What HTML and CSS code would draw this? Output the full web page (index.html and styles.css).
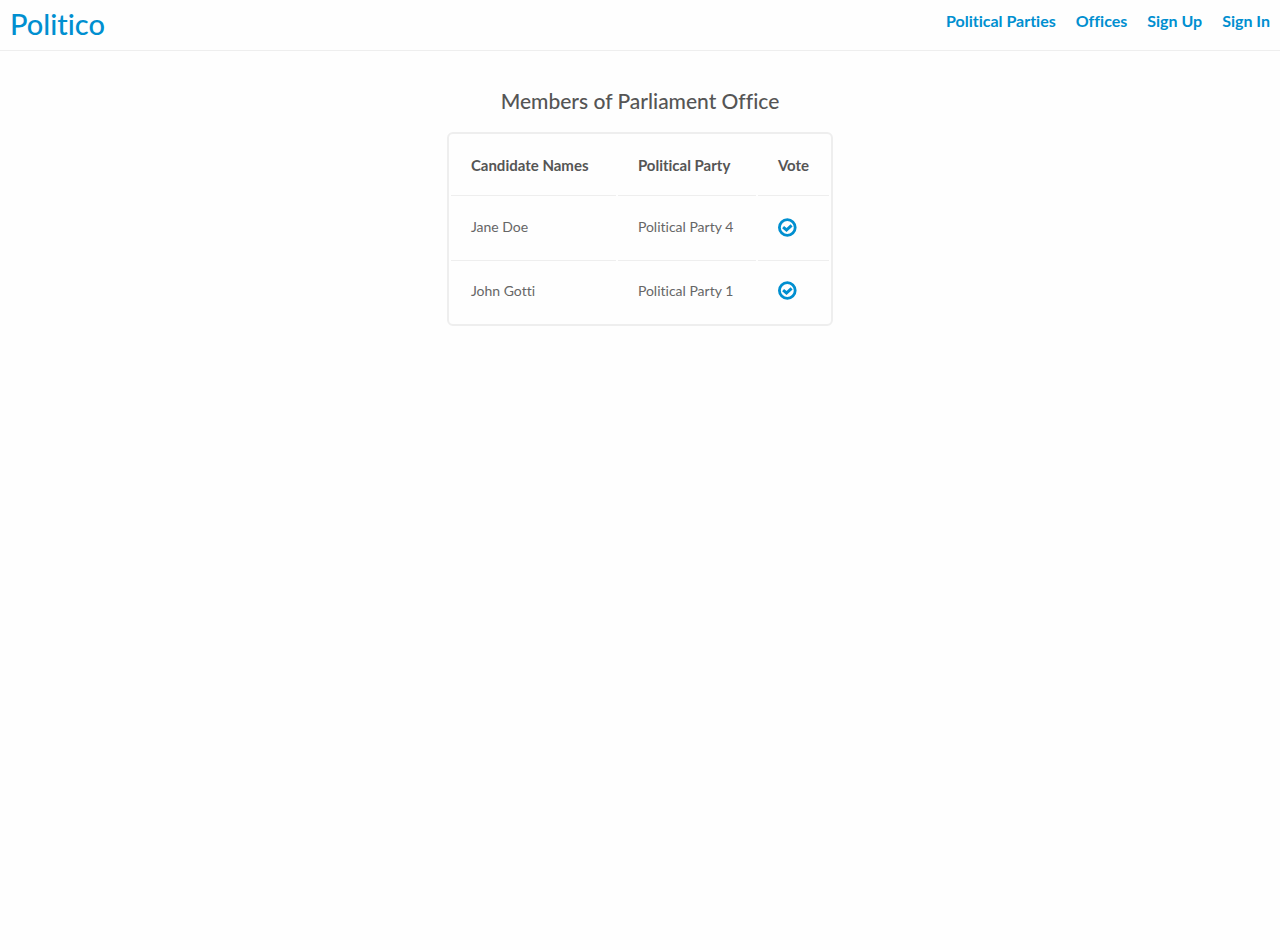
FILE: index.html
```html
<!DOCTYPE html>
<html lang="en">
<head>
<meta charset="utf-8">
<meta name="viewport" content="width=device-width, initial-scale=1">
<title>Politico</title>
<link rel="stylesheet" href="styles.css">
</head>
<body>
<header class="header">
  <a class="brand" href="#">Politico</a>
  <nav class="nav">
    <a href="#">Political Parties</a>
    <a href="#">Offices</a>
    <a href="#">Sign Up</a>
    <a href="#">Sign In</a>
  </nav>
</header>
<main class="main">
  <h1 class="title">Members of Parliament Office</h1>
  <table class="candidates">
    <thead>
      <tr><th class="name" scope="col">Candidate Names</th><th class="party" scope="col">Political Party</th><th class="vote" scope="col">Vote</th></tr>
    </thead>
    <tbody>
      <tr>
        <td>Jane Doe</td><td>Political Party 4</td>
        <td><button class="vote-button" type="button" aria-label="Vote for Jane Doe"><svg viewBox="0 0 19 19" width="19" height="19" aria-hidden="true"><circle cx="9.3" cy="9.5" r="7.9" fill="none" stroke="currentColor" stroke-width="2.8"/><path d="M5.1 9.1 8.5 12 13.6 7.4" fill="none" stroke="currentColor" stroke-width="3"/></svg></button></td>
      </tr>
      <tr>
        <td>John Gotti</td><td>Political Party 1</td>
        <td><button class="vote-button" type="button" aria-label="Vote for John Gotti"><svg viewBox="0 0 19 19" width="19" height="19" aria-hidden="true"><circle cx="9.3" cy="9.5" r="7.9" fill="none" stroke="currentColor" stroke-width="2.8"/><path d="M5.1 9.1 8.5 12 13.6 7.4" fill="none" stroke="currentColor" stroke-width="3"/></svg></button></td>
      </tr>
    </tbody>
  </table>
</main>
</body>
</html>
```
FILE: styles.css
```css
* { box-sizing: border-box; }
body {
  margin: 0;
  background: #fefefe;
  color: #555;
  font-family: Lato, "Open Sans", sans-serif;
  font-size: 14px;
  line-height: 18px;
  font-variant-ligatures: none;
}
.header {
  display: flex;
  justify-content: space-between;
  align-items: flex-start;
  padding: 6px 10px 8px;
  border-bottom: 1px solid #eee;
}
.header a { color: #008fd0; text-decoration: none; }
.brand { font-size: 29px; line-height: 36px; font-weight: 500; }
.nav {
  display: flex;
  gap: 20px;
  padding-top: 6px;
  font-size: 16px;
  font-weight: bold;
}
.main {
  display: flex;
  flex-direction: column;
  align-items: center;
  padding: 38px 10px;
}
.title {
  margin: 0 0 19px;
  font-size: 21px;
  line-height: 24px;
  font-weight: 500;
}
.candidates {
  border: 2px solid #eee;
  border-radius: 6px;
  border-collapse: separate;
  border-spacing: 2px;
}
.candidates th, .candidates td {
  padding: 18px 20px 22px;
  text-align: left;
  vertical-align: middle;
}
.candidates th {
  height: 60px;
  padding: 19px 20px 21px;
  border-bottom: 1px solid #eee;
  font-size: 15px;
  font-weight: bold;
}
.candidates td { height: 63px; color: #666; }
.candidates tr:not(:last-child) td { border-bottom: 1px solid #eee; }
.candidates tr:last-child td { height: 59px; }
.name { min-width: 165px; }
.party { min-width: 138px; }
.vote { min-width: 71px; }
.vote-button {
  display: block;
  padding: 0;
  border: 0;
  background: none;
  color: #008fd0;
  cursor: pointer;
}
.vote-button svg { display: block; }
```
